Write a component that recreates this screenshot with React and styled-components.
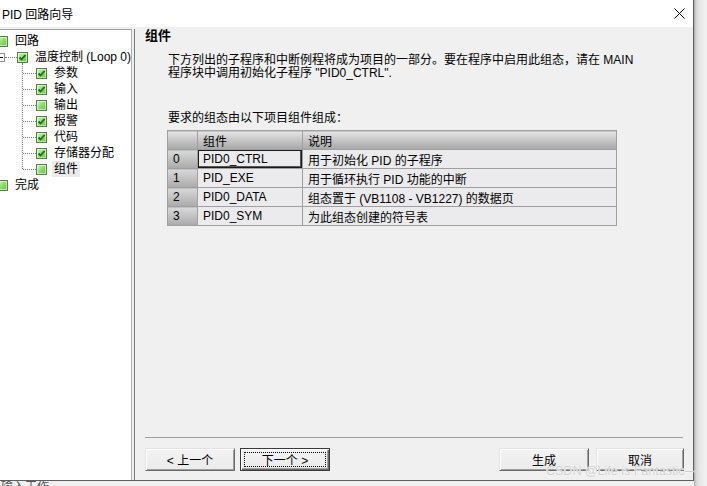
import React from "react";
import styled, { createGlobalStyle, css } from "styled-components";

const GlobalStyle = createGlobalStyle`
  html, body {
    margin: 0;
    padding: 0;
    background: #f0f0f0;
  }
  body {
    font-family: "Liberation Sans", "Noto Sans CJK SC", sans-serif;
    font-size: 12px;
    color: #000;
  }
`;

const Screen = styled.div`
  position: relative;
  width: 707px;
  height: 486px;
  overflow: hidden;
  display: grid;
  grid-template-columns: 694px 13px;
  grid-template-rows: 481px 5px;
  background: #f0f0f0;
`;

const Dialog = styled.div`
  box-sizing: border-box;
  display: flex;
  flex-direction: column;
  background: #f0f0f0;
  border-right: 1px solid #5e5e5e;
  border-bottom: 1px solid #5e5e5e;
  min-height: 0;
`;

const TitleBar = styled.div`
  height: 27px;
  flex: none;
  background: #fff;
  display: flex;
  align-items: center;
  justify-content: space-between;
  padding: 0 8px 0 2px;
  font-size: 12px;
`;

const Body = styled.div`
  flex: 1;
  display: flex;
  min-height: 0;
`;

const TreePanel = styled.div`
  width: 131px;
  margin-top: 2px;
  background: #fff;
  border-top: 1px solid #a0a0a0;
  border-right: 1px solid #b0b0b0;
  padding-top: 3px;
  overflow: hidden;
`;

const Divider = styled.div`
  width: 1px;
  margin-left: 2px;
  margin-top: 2px;
  background: #7c7c7c;
`;

const Row = styled.div`
  height: 16px;
  display: flex;
  align-items: center;
  white-space: nowrap;
  padding-left: ${(p) => p.$indent || 0}px;
`;

const Check = styled.span`
  box-sizing: border-box;
  flex: none;
  width: 11px;
  height: 11px;
  margin-left: ${(p) => p.$shift || 0}px;
  border: 1px solid #5a7d4e;
  background: linear-gradient(135deg, #d4f5c0 0%, #86dc60 55%, #5cc238 100%);
  box-shadow: inset 0 0 0 1px rgba(255, 255, 255, 0.55);
  display: flex;
  align-items: center;
  justify-content: center;
`;

const Label = styled.span`
  margin-left: 5px;
  padding: 0 2px;
  line-height: 16px;
  background: ${(p) => (p.$selected ? "#ebebeb" : "transparent")};
`;

const Connector = styled.span`
  flex: none;
  width: ${(p) => p.$w}px;
  height: 0;
  border-top: 1px dotted #808080;
`;

const Expander = styled.span`
  box-sizing: border-box;
  flex: none;
  width: 9px;
  height: 9px;
  margin-left: -4px;
  border: 1px solid #919191;
  background: #fff;
  display: flex;
  align-items: center;
  justify-content: center;
  &::after {
    content: "";
    width: 5px;
    height: 1px;
    background: #000;
  }
`;

const ChildGroup = styled.div`
  position: relative;
  &::before {
    content: "";
    position: absolute;
    left: 22px;
    top: -2px;
    bottom: 8px;
    border-left: 1px dotted #808080;
  }
`;

const Content = styled.div`
  flex: 1;
  display: flex;
  flex-direction: column;
  padding: 1px 0 9px 10px;
  min-width: 0;
`;

const Heading = styled.div`
  font-weight: bold;
  font-size: 13px;
  line-height: 16px;
`;

const Para = styled.div`
  margin-left: 23px;
  margin-top: ${(p) => p.$top}px;
  line-height: 13px;
  font-size: 12px;
  white-space: nowrap;
`;

const Table = styled.table`
  margin-top: 5px;
  margin-left: 22px;
  width: 450px;
  border-collapse: collapse;
  table-layout: fixed;
  font-size: 12px;
`;

const HeadCell = styled.th`
  height: 18px;
  padding: 0 0 0 5px;
  text-align: left;
  font-weight: normal;
  border: 1px solid #a0a0a0;
  background: linear-gradient(#e4e4e4, #a6a6a6);
`;

const IndexCell = styled.td`
  height: 18px;
  padding: 0 0 0 5px;
  border: 1px solid #a0a0a0;
  background: linear-gradient(#d9d9d9, #aaaaaa);
`;

const Cell = styled.td`
  height: 18px;
  padding: 0 0 0 5px;
  border: 1px solid #a0a0a0;
  background: #ebebed;
  white-space: nowrap;
  overflow: hidden;
  ${(p) =>
    p.$selected &&
    css`
      box-shadow: inset 0 0 0 1px #1a1a1a, inset -1px -1px 0 1px #555;
    `}
`;

const Footer = styled.div`
  margin-top: auto;
  display: flex;
  flex-direction: column;
`;

const Rule = styled.div`
  height: 1px;
  margin-right: 10px;
  background: #a0a0a0;
`;

const ButtonRow = styled.div`
  margin-top: 10px;
  padding-right: 9px;
  display: flex;
  gap: 5px;
`;

const Spacer = styled.div`
  flex: 1;
`;

const Button = styled.button`
  box-sizing: border-box;
  width: ${(p) => p.$w || 90}px;
  height: 23px;
  padding: 0;
  margin-left: ${(p) => p.$gap || 0}px;
  font-family: "Liberation Sans", "Noto Sans CJK SC", sans-serif;
  font-size: 12px;
  color: #000;
  background: linear-gradient(#f3f3f3, #ebebeb);
  border: 1px solid;
  border-color: #e3e3e3 #696969 #696969 #e3e3e3;
  box-shadow: inset 1px 1px 0 #fff, inset -1px -1px 0 #a0a0a0;
  display: flex;
  align-items: stretch;
  justify-content: center;
  ${(p) =>
    p.$default &&
    css`
      border-color: #3a3a3a;
      box-shadow: inset 1px 1px 0 #fff, inset -1px -1px 0 #696969,
        inset -2px -2px 0 #a0a0a0;
    `}
`;

const ButtonText = styled.span`
  flex: 1;
  display: flex;
  align-items: center;
  justify-content: center;
  ${(p) =>
    p.$focus &&
    css`
      margin: 3px;
      border: 1px dotted #000;
    `}
`;

const BackStrip = styled.div`
  grid-row: 1 / span 2;
  grid-column: 2;
  background: linear-gradient(to right, #a8a8a8 0, #d6d6d6 2px, #e8e8e8 6px, #f2f2f2 13px);
  display: flex;
  flex-direction: column;
  padding-top: 113px;
`;

const Band = styled.div`
  height: 18px;
  background: linear-gradient(#c4c4c4, #747474);
`;

const BandLine = styled.div`
  height: 1px;
  margin-top: 14px;
  margin-bottom: 120px;
  background: #7a7a7a;
`;

const StatusBar = styled.div`
  overflow: hidden;
  background: #f0f0f0;
  color: #555;
  font-size: 12px;
  line-height: 12px;
  padding-left: 1px;
  white-space: nowrap;
`;

const Watermark = styled.div`
  position: absolute;
  left: 546px;
  top: 465px;
  font-family: "Liberation Sans", sans-serif;
  font-size: 12.5px;
  line-height: 13px;
  color: #cfcfcf;
  text-shadow: 0 0 1px #ffffff, 0 0 1px #ffffff;
  white-space: nowrap;
  pointer-events: none;
`;

const Tick = () => (
  <svg width="9" height="9" viewBox="0 0 9 9">
    <polyline
      points="1.5,4.5 3.5,6.5 7.5,2"
      fill="none"
      stroke="#17701a"
      strokeWidth="1.8"
    />
  </svg>
);

const CloseIcon = () => (
  <svg width="11" height="11" viewBox="0 0 11 11">
    <path d="M0.5 0.5 L10.5 10.5 M10.5 0.5 L0.5 10.5" stroke="#000" strokeWidth="1" />
  </svg>
);

const steps = [
  { label: "参数", checked: true },
  { label: "输入", checked: true },
  { label: "输出", checked: false },
  { label: "报警", checked: true },
  { label: "代码", checked: true },
  { label: "存储器分配", checked: true },
  { label: "组件", checked: false, selected: true },
];

const parts = [
  { name: "PID0_CTRL", desc: "用于初始化 PID 的子程序", selected: true },
  { name: "PID_EXE", desc: "用于循环执行 PID 功能的中断" },
  { name: "PID0_DATA", desc: "组态置于 (VB1108 - VB1227) 的数据页" },
  { name: "PID0_SYM", desc: "为此组态创建的符号表" },
];

const App = () => {
  return (
    <Screen>
      <GlobalStyle />
      <Dialog>
        <TitleBar>
          <span>PID 回路向导</span>
          <CloseIcon />
        </TitleBar>
        <Body>
          <TreePanel>
            <Row>
              <Check $shift={-3} />
              <Label>回路</Label>
            </Row>
            <Row>
              <Expander />
              <Connector $w={12} />
              <Check>
                <Tick />
              </Check>
              <Label>温度控制 (Loop 0)</Label>
            </Row>
            <ChildGroup>
              {steps.map((s) => (
                <Row key={s.label} $indent={23}>
                  <Connector $w={13} />
                  <Check>{s.checked && <Tick />}</Check>
                  <Label $selected={s.selected}>{s.label}</Label>
                </Row>
              ))}
            </ChildGroup>
            <Row>
              <Check $shift={-3} />
              <Label>完成</Label>
            </Row>
          </TreePanel>
          <Divider />
          <Content>
            <Heading>组件</Heading>
            <Para $top={10}>
              下方列出的子程序和中断例程将成为项目的一部分。要在程序中启用此组态，请在 MAIN
              <br />
              程序块中调用初始化子程序 "PID0_CTRL".
            </Para>
            <Para $top={32}>要求的组态由以下项目组件组成：</Para>
            <Table>
              <colgroup>
                <col style={{ width: 30 }} />
                <col style={{ width: 105 }} />
                <col />
              </colgroup>
              <thead>
                <tr>
                  <HeadCell />
                  <HeadCell>组件</HeadCell>
                  <HeadCell>说明</HeadCell>
                </tr>
              </thead>
              <tbody>
                {parts.map((p, i) => (
                  <tr key={p.name}>
                    <IndexCell>{i}</IndexCell>
                    <Cell $selected={p.selected}>{p.name}</Cell>
                    <Cell>{p.desc}</Cell>
                  </tr>
                ))}
              </tbody>
            </Table>
            <Footer>
              <Rule />
              <ButtonRow>
                <Button>
                  <ButtonText>&lt; 上一个</ButtonText>
                </Button>
                <Button $default>
                  <ButtonText $focus>下一个 &gt;</ButtonText>
                </Button>
                <Spacer />
                <Button>
                  <ButtonText>生成</ButtonText>
                </Button>
                <Button $w={88} $gap={2}>
                  <ButtonText>取消</ButtonText>
                </Button>
              </ButtonRow>
            </Footer>
          </Content>
        </Body>
      </Dialog>
      <BackStrip>
        {[0, 1, 2].map((n) => (
          <React.Fragment key={n}>
            <Band />
            <BandLine />
          </React.Fragment>
        ))}
      </BackStrip>
      <StatusBar>输入工作</StatusBar>
      <Watermark>CSDN @Life is Fantastic—</Watermark>
    </Screen>
  );
};

export default App;
